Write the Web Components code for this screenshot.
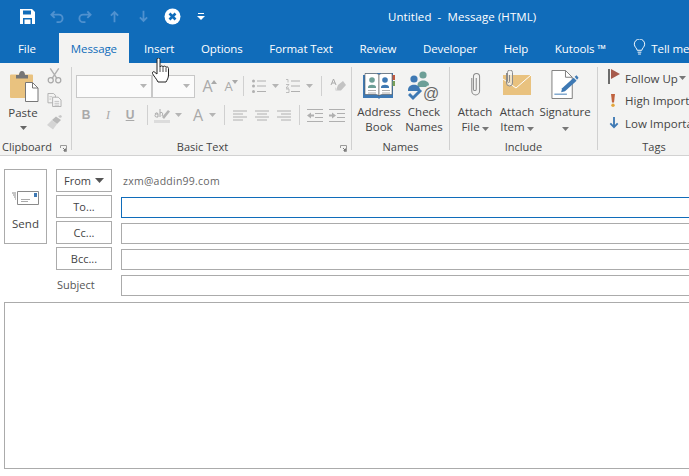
<!DOCTYPE html>
<html><head><meta charset="utf-8">
<style>
html,body{margin:0;padding:0;background:#fff;width:689px;height:476px;overflow:hidden;font-family:"Open Sans","Noto Sans",sans-serif;color:#444;}
x-app{width:689px;height:476px}
</style></head><body>
<x-app>
  <x-titlebar></x-titlebar>
  <x-tabs></x-tabs>
  <x-ribbon>
    <x-group label="Clipboard" launcher w="72" shift="left">
      <x-paste></x-paste>
    </x-group>
    <x-group label="Basic Text" launcher w="280" shift="basic">
      <x-basic></x-basic>
    </x-group>
    <x-group label="Names" w="98">
      <x-names></x-names>
    </x-group>
    <x-group label="Include" w="148">
      <x-include></x-include>
    </x-group>
    <x-group label="Tags" w="112" last>
      <x-tags></x-tags>
    </x-group>
  </x-ribbon>
  <x-compose></x-compose>
  <x-cursor></x-cursor>
</x-app>
<script>
function def(name, css, html, extra){
  customElements.define(name, class extends HTMLElement{
    constructor(){super();const r=this.attachShadow({mode:'open'});
      r.innerHTML='<style>'+css+'</style>'+(typeof html==='function'?html(this):html);}
    connectedCallback(){ if(extra) extra(this); }
  });
}
const CARET='<svg width="7" height="4" viewBox="0 0 7 4"><path d="M0 0h7L3.5 4z" fill="#777"/></svg>';
const CARETL='<svg width="7" height="4" viewBox="0 0 7 4"><path d="M0 0h7L3.5 4z" fill="#b5b5b5"/></svg>';

def('x-app',':host{display:block;position:relative;overflow:hidden}','<slot></slot>');

def('x-titlebar',`
:host{display:flex;align-items:center;height:33px;background:#106cba;color:#fff;font-size:11.5px;white-space:pre}
.qa{display:flex;align-items:center;height:33px;padding-left:20px}
svg{display:block;flex:none}
.t{margin-left:183px;letter-spacing:.07px}
`,`<div class="qa">
<svg width="15" height="15" viewBox="0 0 15 15" style="margin-right:15px"><path d="M0 0h12l3 3v12H0z" fill="#fff"/><path d="M3 1.500h8v4H3z" fill="#106cba"/><path d="M3 9h9v6H3z" fill="#106cba"/><path d="M4.500 10.500h6v4.500h-6z" fill="#fff"/></svg>
<svg width="14" height="14" viewBox="0 0 15 14" style="margin-right:14px"><path d="M5 1 1.500 4.500 5 8M2 4.500h7.500a4 4 0 0 1 0 8H7" fill="none" stroke="#4f91cf" stroke-width="2"/></svg>
<svg width="14" height="14" viewBox="0 0 15 14" style="margin-right:18px"><path d="M10 1l3.500 3.500L10 8M13 4.500H5.500a4 4 0 0 0 0 8H8" fill="none" stroke="#4f91cf" stroke-width="2"/></svg>
<svg width="9" height="13" viewBox="0 0 10 13" style="margin-right:20px"><path d="M1 5.500 5 1.500l4 4M5 2v11" fill="none" stroke="#4f91cf" stroke-width="2"/></svg>
<svg width="9" height="13" viewBox="0 0 10 13" style="margin-right:16px"><path d="M1 7.500l4 4 4-4M5 11V0" fill="none" stroke="#4f91cf" stroke-width="2"/></svg>
<svg width="17" height="17" viewBox="0 0 17 17" style="margin-right:16px"><circle cx="8.500" cy="8.500" r="8" fill="#fff"/><path d="M5.500 5.500l6 6M11.500 5.500l-6 6" stroke="#106cba" stroke-width="2.600"/></svg>
<svg width="8" height="7" viewBox="0 0 8 7"><path d="M1 .5h6" stroke="#fff"/><path d="M0 3h8L4 7z" fill="#fff"/></svg>
</div><div class="t">Untitled  -  Message (HTML)</div>`);

def('x-tabs',`
:host{display:flex;height:30px;background:#106cba;color:#fff;font-size:11.5px;letter-spacing:-.1px;padding-left:5px;overflow:hidden;white-space:nowrap}
div{display:flex;align-items:center;padding:0 13.3px;height:30px;flex:none}
.file{padding:0 23px 0 13px}
.on{background:#f3f3f2;color:#106cba;padding:0 12px;margin-right:1.700px}
.bulb{padding-left:14px}
svg{margin:-3px 5px 0 0}
`,`<div class="file">File</div><div class="on">Message</div><div>Insert</div><div>Options</div><div>Format Text</div><div>Review</div><div>Developer</div><div>Help</div><div>Kutools ™</div>
<div class="bulb"><svg width="13" height="16" viewBox="0 0 13 17"><path d="M4 12c0-2-3-3.500-3-6.500a5.500 5.500 0 0 1 11 0C12 8.500 9 10 9 12zM4.500 14h4M5 16h3" fill="none" stroke="#fff"/></svg>Tell me</div>`);

def('x-ribbon',`
:host{display:flex;height:92px;background:#f3f3f2;border-bottom:1px solid #d2d2d2;box-sizing:content-box;font-size:11.5px;color:#444;overflow:hidden}
`,'<slot></slot>');

def('x-group',`
:host{display:block;flex:none;padding:4px 0 5px;box-sizing:border-box;height:92px}
.in{height:83px;border-right:1px solid #d0d0d0;display:flex;flex-direction:column;box-sizing:border-box}
.c{flex:1;min-height:0}
.l{height:14px;line-height:14px;font-size:11px;text-align:center;position:relative;color:#444;margin-bottom:-4px}
:host([shift=left]) .l{text-align:left;padding-left:2px}
:host([shift=basic]) .l{padding-right:18px}
:host([last]) .in{border-right:0}
svg{position:absolute;right:4px;top:5px}
`,h=>`<div class="in"><div class="c"><slot></slot></div><div class="l">${h.getAttribute('label')}${h.hasAttribute('launcher')?'<svg width="7" height="7" viewBox="0 0 7 7"><path d="M.5 3V.5H6.500V6.500H4" fill="none" stroke="#9a9a9a"/><path d="M3 3l2.500 2.500M5.500 3.500v2h-2" fill="none" stroke="#777"/></svg>':''}</div></div>`,
h=>{h.style.width=h.getAttribute('w')+'px';});

def('x-paste',`
:host{display:flex;height:100%;padding-left:6px;box-sizing:border-box}
.p{display:flex;flex-direction:column;align-items:center;width:34px}
.p svg:first-child{margin:4px 0 3px 3px;flex:none}
.p span{line-height:15px;height:15px;flex:none}
.car{margin-top:6px;flex:none}
.s{display:flex;flex-direction:column;margin-left:7px;padding-top:1px}
svg{display:block}
`,`<div class="p"><svg width="29" height="31" viewBox="0 0 29 31"><path d="M0 4.500a1 1 0 0 1 1-1h21a1 1 0 0 1 1 1V27H1a1 1 0 0 1-1-1z" fill="#e9c27f"/><path d="M6 4h3c0-2 1-4 3-4s3 2 3 4h3v3.500H6z" fill="#767676"/><path d="M15.500 11.500h7l5.500 5.500v13.500H15.500z" fill="#fff" stroke="#777"/><path d="M22.500 11.500v5.500H28" fill="none" stroke="#777"/></svg>
<span>Paste</span><svg class="car" width="7" height="4" viewBox="0 0 7 4"><path d="M0 0h7L3.500 4z" fill="#666"/></svg></div>
<div class="s">
<svg width="15" height="16" viewBox="0 0 15 17" style="margin-bottom:9px"><path d="M3 .5l7 10.500M12 .5 5 11" stroke="#b0b0b0" stroke-width="1.500" fill="none"/><circle cx="3.500" cy="13" r="2.700" fill="none" stroke="#a8a8a8" stroke-width="1.300"/><circle cx="11.500" cy="13" r="2.700" fill="none" stroke="#a8a8a8" stroke-width="1.300"/></svg>
<svg width="15" height="14" viewBox="0 0 15 15" style="margin-bottom:8px"><path d="M.5.5h6l2 2v8H.5z" fill="#f3f3f2" stroke="#adadad"/><path d="M5.500 4.500h6l3 3v7h-9z" fill="#f6f6f6" stroke="#adadad"/><path d="M2 4h3M2 6.500h2M7.500 9h5M7.500 11h5M7.500 13h5" stroke="#c0c0c0"/></svg>
<svg width="16" height="15" viewBox="0 0 16 15"><path d="M9 1.500 14 5l-4 4-5-4z" fill="#b9b9b9"/><path d="M11 1 13 3l2-1-1-2z" fill="#c8c8c8"/><path d="M5 5l5 4-4 5.500L0 10z" fill="#d4d4d4"/></svg>
</div>`);

def('x-basic',`
:host{display:flex;flex-direction:column;padding:7px 0 0 4px;height:100%;box-sizing:border-box}
.r{display:flex;align-items:center;height:24px;flex:none}
.r2{height:20px;margin-top:7px}
.box{height:23px;background:#fbfbfb;border:1px solid #c8c8c8;box-sizing:border-box;display:flex;align-items:center;justify-content:flex-end;padding-right:4px;flex:none}
.sep{width:1px;height:20px;background:#d0d0d0;flex:none}
svg{display:block;flex:none}
.L{color:#a9a9a9;font-weight:700;font-size:12px;text-align:center;font-family:"Liberation Sans",sans-serif;flex:none}
.A{color:#a9a9a9;text-align:center;line-height:18px;flex:none}
.cr{display:flex;flex:none}
`,`<div class="r">
<div class="box" style="width:76px">${CARETL}</div><div class="box" style="width:43px;margin-left:0">${CARETL}</div>
<div class="A" style="width:13px;margin-left:6px;font-size:16px">A</div><svg width="6" height="4" viewBox="0 0 6 4" style="margin:-9px 0 0 -3px"><path d="M0 4l3-4 3 4z" fill="#a9a9a9"/></svg>
<div class="A" style="width:9px;margin-left:7px;font-size:13px">A</div><svg width="6" height="4" viewBox="0 0 6 4" style="margin:-9px 0 0 -1px"><path d="M0 0h6L3 4z" fill="#a9a9a9"/></svg>
<div class="sep" style="margin:0 8px 0 5px"></div>
<svg width="14" height="14" viewBox="0 0 14 14"><circle cx="1.500" cy="2" r="1.500" fill="#b0b0b0"/><circle cx="1.500" cy="7" r="1.500" fill="#b0b0b0"/><circle cx="1.500" cy="12.500" r="1.500" fill="#b0b0b0"/><path d="M5 2h9M5 7h9M5 12.500h9" stroke="#b0b0b0"/></svg>
<span class="cr" style="margin:0 7px 0 6px">${CARETL}</span>
<svg width="14" height="14" viewBox="0 0 14 14"><path d="M0 .5h2v3M0 5.500h3L0 9h3M0 10h3v3.500H0" fill="none" stroke="#b0b0b0" stroke-width=".8"/><path d="M5 2h9M5 7h9M5 12.500h9" stroke="#b0b0b0"/></svg>
<span class="cr" style="margin:0 8px 0 6px">${CARETL}</span>
<div class="sep" style="margin:0 8px 0 0"></div>
<svg width="16" height="16" viewBox="0 0 16 16"><path d="M8 7 13 3l3 4-5 5.500H6z" fill="#c3c3c3"/><path d="M5 9l3 3.500H5z" fill="#ddd"/><path d="M1 7l2.500-6L6 7M2 5h3" fill="none" stroke="#a9a9a9"/></svg>
</div>
<div class="r r2">
<div class="L" style="width:12px;margin-left:4px">B</div>
<div class="L" style="width:12px;margin-left:10px;font-style:italic;font-weight:400;font-family:'Liberation Serif',serif">I</div>
<div class="L" style="width:12px;margin-left:10px;text-decoration:underline">U</div>
<div class="sep" style="margin:0 6px 0 11px"></div>
<svg width="16" height="16" viewBox="0 0 16 16"><path d="M0 13h16v3H0z" fill="#dcdcdc"/><path d="M1 7c.5-1.500 3-1.500 3 0v3H2.500a1.500 1.500 0 0 1 0-3H4M6 2v8M6 6c2-1.500 3.500 0 2 3" fill="none" stroke="#a9a9a9"/><path d="M8 10l6-7 2 1.500L10 12z" fill="#b5b5b5"/></svg>
<span class="cr" style="margin:0 10.500px 0 4.500px">${CARETL}</span>
<div class="A" style="width:12px;font-size:16px">A</div>
<span class="cr" style="margin:0 8px 0 4.500px">${CARETL}</span>
<div class="sep" style="margin:0 8px 0 0"></div>
<svg width="15" height="11" viewBox="0 0 15 11"><path d="M0 1h14M0 4h10M0 7h14M0 10h10" stroke="#b0b0b0"/></svg>
<svg width="15" height="11" viewBox="0 0 15 11" style="margin-left:7px"><path d="M0 1h14M2 4h10M0 7h14M2 10h10" stroke="#b0b0b0"/></svg>
<svg width="15" height="11" viewBox="0 0 15 11" style="margin-left:7px"><path d="M0 1h14M4 4h10M0 7h14M4 10h10" stroke="#b0b0b0"/></svg>
<div class="sep" style="margin:0 7px 0 7px"></div>
<svg width="16" height="13" viewBox="0 0 16 13"><path d="M0 .5h16M8 4.500h8M8 8.500h8M0 12.500h16" stroke="#b0b0b0"/><path d="M0 6.500 4 3.500v2h3v2H4v2z" fill="#b0b0b0"/></svg>
<svg width="16" height="13" viewBox="0 0 16 13" style="margin-left:6px"><path d="M0 .5h16M8 4.500h8M8 8.500h8M0 12.500h16" stroke="#b0b0b0"/><path d="M7 6.500 3 3.500v2H0v2h3v2z" fill="#b0b0b0"/></svg>
</div>`);

def('x-big',`
:host{display:block;flex:none;text-align:center;line-height:15px;white-space:nowrap}
.i{height:34px;display:flex;align-items:flex-start;justify-content:center}
`,`<div class="i"><slot name="i"></slot></div><div><slot></slot></div>`);

def('x-names',`
:host{display:flex;padding:3px 0 0 0;height:100%;box-sizing:border-box}
x-big:nth-of-type(1){margin-left:4px;width:46px}
x-big:nth-of-type(2){margin-left:2px;width:40px}
`,`<x-big><svg slot="i" style="margin-top:2px" width="32" height="27" viewBox="0 0 32 27"><path d="M0 3h2V1h28v25H17l-1 1-1-1H0z" fill="#3e79b4"/><path d="M2 1.500h10c2 0 3.500.5 4 1.500v21c-.5-1-2-1.500-4-1.500H2z" fill="#fff" stroke="#555" stroke-width=".6"/><path d="M16 3c.5-1 2-1.500 4-1.500h9v21h-9c-2 0-3.500.5-4 1.500z" fill="#fff" stroke="#555" stroke-width=".6"/><path d="M29.500 3H32v5h-2.500z" fill="#c05a3e"/><path d="M29.500 9H32v5h-2.500z" fill="#7aa05a"/><circle cx="9" cy="8" r="2.800" fill="#6d9f97"/><path d="M5 15c0-3 8-3 8 0v1H5z" fill="#6d9f97"/><circle cx="22" cy="8" r="2.800" fill="#3e79b4"/><path d="M18 15c0-3 8-3 8 0v1h-8z" fill="#3e79b4"/><path d="M5 18.500h8M5 21h8M19 18.500h8M19 21h8" stroke="#999" stroke-width=".8"/></svg>Address<br>Book</x-big>
<x-big><svg slot="i" style="margin-top:1px" width="32" height="31" viewBox="0 0 32 31"><circle cx="15" cy="4" r="3.600" fill="#6d9f97"/><path d="M9.500 14c0-6 11.500-6 11.500 0v2H9.500z" fill="#6d9f97"/><circle cx="6" cy="8" r="3.600" fill="#3e79b4"/><path d="M0 19c0-7 12-7 12 0v1H0z" fill="#3e79b4"/><path d="M1 23l4 4 8-8" fill="none" stroke="#3e79b4" stroke-width="3"/><circle cx="23" cy="22" r="8" fill="#f3f3f2"/><text x="23" y="27.500" font-size="16" text-anchor="middle" fill="#666" font-family="Liberation Sans">@</text></svg>Check<br>Names</x-big>`);

def('x-include',`
:host{display:flex;padding:3px 0 0 0;height:100%;box-sizing:border-box}
x-big:nth-of-type(1){margin-left:7px;width:36px}
x-big:nth-of-type(2){margin-left:6px;width:36px}
x-big:nth-of-type(3){margin-left:4px;width:52px}
.c{display:inline-block;margin:0 0 2px 2px}
`,`<x-big><svg slot="i" style="margin-top:1px" width="13" height="27" viewBox="0 0 14 28"><path d="M3 7v14a4.200 4.200 0 0 0 8.400 0V5.500a3.300 3.300 0 0 0-6.600 0V19a1.500 1.500 0 0 0 3 0V7" fill="none" stroke="#8b8b8b" stroke-width="1.100"/></svg>Attach<br>File<span class="c">${CARET}</span></x-big>
<x-big><svg slot="i" width="28" height="26" viewBox="0 0 28 26"><path d="M0 5h28v20H0z" fill="#e9c27f"/><path d="M0 9l13 9L28 5" fill="none" stroke="#fff" stroke-width="1"/><path d="M3.500 3v10a3 3 0 0 0 6 0V2.500a2.300 2.300 0 0 0-5 0v9a1 1 0 0 0 2 0V5" fill="#f3f3f2" fill-opacity=".6" stroke="#8b8b8b" stroke-width="1"/></svg>Attach<br>Item<span class="c">${CARET}</span></x-big>
<x-big><svg slot="i" width="28" height="29" viewBox="0 0 28 30"><path d="M.5.500h14l7 7v22H.5z" fill="#fff" stroke="#7c7c7c"/><path d="M14.500.500v7h7" fill="none" stroke="#7c7c7c"/><path d="M3 25h13" stroke="#3e79b4" stroke-width="1"/><path d="M10 23l1-4L23 8l3 3L14 22z" fill="#3e79b4"/><path d="M24 7l2-1.500 2 2.500-1.500 2z" fill="#3e79b4"/></svg>Signature<br><span class="c" style="margin:0">${CARET}</span></x-big>`);

def('x-tags',`
:host{display:block;padding:0 0 0 10px;white-space:nowrap;height:100%;box-sizing:border-box}
.r{display:flex;align-items:center;height:22px}
.ic{width:17px;flex:none;display:flex;justify-content:flex-start}
svg{display:block}
.c{margin-left:1px;display:flex;margin-top:-1px}
`,`<div class="r"><span class="ic"><svg style="margin:-3px 0 0 0" width="14" height="15" viewBox="0 0 14 15"><path d="M0 0h2v15H0z" fill="#6c6c6c"/><path d="M3 0l9 5-9 5z" fill="#a65a4b"/></svg></span>Follow Up<span class="c">${CARET}</span></div>
<div class="r" style="height:23px"><span class="ic"><svg style="margin-left:3px" width="4" height="13" viewBox="0 0 4 13"><path d="M0 0h4L3 8.500H1z" fill="#c0623f"/><circle cx="2" cy="11.300" r="1.700" fill="#e3a63b"/></svg></span>High Importance</div>
<div class="r"><span class="ic"><svg style="margin-left:1px" width="10" height="12" viewBox="0 0 10 13"><path d="M1 7l4 4 4-4M5 11V0" fill="none" stroke="#3e79b4" stroke-width="2"/></svg></span>Low Importance</div>`);

def('x-fbtn',`
:host{display:flex;align-items:center;justify-content:center;box-sizing:border-box;border:1px solid #ababab;background:#fff;font-size:11px;color:#444;gap:4px}
`,'<slot></slot>');
def('x-input',`:host{display:block;box-sizing:border-box;height:21px;align-self:end;border:1px solid #ababab;margin-right:-6px;background:#fff}
:host([focus]){border-color:#106cba;}`,'');

def('x-compose',`
:host{display:block;font-size:11px;color:#444}
.g{display:grid;grid-template-columns:44px 56px 1fr;grid-template-rows:repeat(5,23px);row-gap:3px;column-gap:0;padding:13px 0 0 4px}
.send{grid-row:1 / span 3;grid-column:1;flex-direction:column;gap:11px;justify-content:flex-start;padding-top:21px;margin-right:1px;font-size:11.5px}
.send span{line-height:15px}
.b{grid-column:2;margin-left:8px;margin-right:-8px;}
.v{grid-column:3;margin-left:17px}
.em{grid-column:3;margin-left:19px;align-self:center;color:#666;font-size:10.5px;letter-spacing:.25px}
.sub{grid-column:2;margin:0 -8px 2px 9px;align-self:end;line-height:19px;color:#555}
.body{display:block;height:167px;border:1px solid #ababab;margin:6px -6px 0 4px;box-sizing:border-box}
svg{display:block;flex:none}
`,`<div class="g">
<x-fbtn class="send"><svg width="27" height="14" viewBox="0 0 27 14"><path d="M5.500.5h21v13h-21z" fill="#fff" stroke="#8a8a8a"/><path d="M9 8.500h9M9 10.500h7" stroke="#aaa"/><path d="M22 2h3v4h-3z" fill="#3e79b4"/><path d="M0 2h4M1 4h3M2 6h2M3 8h1" stroke="#8a8a8a"/></svg><span>Send</span></x-fbtn>
<x-fbtn class="b"><span>From</span><svg width="9" height="5" viewBox="0 0 9 5"><path d="M0 0h9L4.500 5z" fill="#555"/></svg></x-fbtn><div class="em">zxm@addin99.com</div>
<x-fbtn class="b">To...</x-fbtn><x-input class="v" focus></x-input>
<x-fbtn class="b">Cc...</x-fbtn><x-input class="v"></x-input>
<x-fbtn class="b">Bcc...</x-fbtn><x-input class="v"></x-input>
<div class="sub">Subject</div><x-input class="v"></x-input>
</div><div class="body"></div>`);

def('x-cursor',`:host{position:absolute;left:151px;top:58px;width:20px;height:26px;display:block}svg{display:block}`,
`<svg width="20" height="26" viewBox="0 0 20 26"><path d="M6 1.500a1.500 1.500 0 0 1 3 0V9c.5-1.500 3-1.500 3 0 .5-1.300 3-1.200 3 .5.500-1 2.500-.8 2.500 1V17c0 3-1.500 5-2.500 7H7c-1-2.500-5-7-5.500-8.500-.5-2 1.500-2.500 2.500-1L6 16z" fill="#fff" stroke="#222" stroke-width="1"/><path d="M9 9v5M12 9v5M15 10v4" stroke="#222" stroke-width=".8"/></svg>`);
</script>
</body></html>
